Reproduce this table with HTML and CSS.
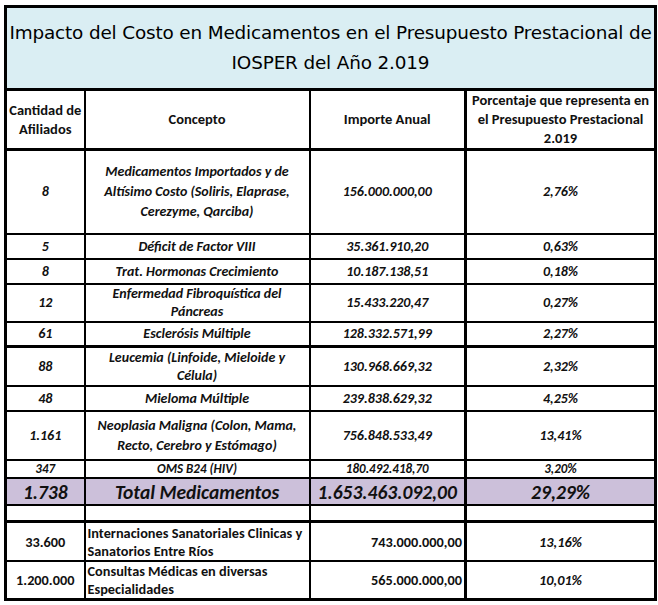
FILE: index.html
```html
<!DOCTYPE html>
<html lang="es">
<head>
<meta charset="utf-8">
<title>Impacto del Costo en Medicamentos</title>
<link rel="stylesheet" href="styles.css">
</head>
<body>
<div class="sheet">
<table class="grid">
  <colgroup>
    <col class="c1"><col class="c2"><col class="c3"><col class="c4">
  </colgroup>
  <tr class="r-title">
    <td colspan="4" class="title">Impacto del Costo en Medicamentos en el Presupuesto Prestacional de<br>IOSPER del Año 2.019</td>
  </tr>
  <tr class="r-head">
    <th>Cantidad de Afiliados</th>
    <th>Concepto</th>
    <th>Importe Anual</th>
    <th class="pct-head">Porcentaje que representa en el Presupuesto Prestacional 2.019</th>
  </tr>
  <tr class="it h86">
    <td>8</td><td class="con">Medicamentos Importados y de Altísimo Costo (Soliris, Elaprase, Cerezyme, Qarciba)</td><td>156.000.000,00</td><td>2,76%</td>
  </tr>
  <tr class="it h25">
    <td>5</td><td class="con">Déficit de Factor VIII</td><td>35.361.910,20</td><td>0,63%</td>
  </tr>
  <tr class="it h25">
    <td>8</td><td class="con">Trat. Hormonas Crecimiento</td><td>10.187.138,51</td><td>0,18%</td>
  </tr>
  <tr class="it h39">
    <td>12</td><td class="con">Enfermedad Fibroquística del Páncreas</td><td>15.433.220,47</td><td>0,27%</td>
  </tr>
  <tr class="it h24 thick-bottom">
    <td>61</td><td class="con">Esclerósis Múltiple</td><td>128.332.571,99</td><td>2,27%</td>
  </tr>
  <tr class="it h40">
    <td>88</td><td class="con">Leucemia (Linfoide, Mieloide y Célula)</td><td>130.968.669,32</td><td>2,32%</td>
  </tr>
  <tr class="it h25">
    <td>48</td><td class="con">Mieloma Múltiple</td><td>239.838.629,32</td><td>4,25%</td>
  </tr>
  <tr class="it h49">
    <td>1.161</td><td class="con">Neoplasia Maligna (Colon, Mama, Recto, Cerebro y Estómago)</td><td>756.848.533,49</td><td>13,41%</td>
  </tr>
  <tr class="it small">
    <td>347</td><td class="con">OMS B24 (HIV)</td><td>180.492.418,70</td><td>3,20%</td>
  </tr>
  <tr class="it total">
    <td>1.738</td><td>Total Medicamentos</td><td>1.653.463.092,00</td><td>29,29%</td>
  </tr>
  <tr class="empty thick-bottom">
    <td></td><td></td><td></td><td></td>
  </tr>
  <tr class="plain p39">
    <td>33.600</td><td class="left">Internaciones Sanatoriales Clinicas y Sanatorios Entre Ríos</td><td class="right">743.000.000,00</td><td class="ital">13,16%</td>
  </tr>
  <tr class="plain">
    <td>1.200.000</td><td class="left">Consultas Médicas en diversas Especialidades</td><td class="right">565.000.000,00</td><td class="ital">10,01%</td>
  </tr>
</table>
</div>
</body>
</html>
```

FILE: styles.css
```css
html, body {
  margin: 0;
  padding: 0;
  background: #ffffff;
}

.sheet {
  padding: 5px 0 0 4px;
}

.grid {
  width: 650px;
  table-layout: fixed;
  border-collapse: collapse;
  border: 3px solid #000;
  font-family: "Carlito", "Lato", "Open Sans", sans-serif;
  font-weight: bold;
  font-size: 14px;
  color: #111;
}

.c1 { width: 79px; }
.c2 { width: 225px; }
.c3 { width: 156px; }
.c4 { width: 190px; }

.grid td,
.grid th {
  border: 2px solid #000;
  padding: 0 3px;
  text-align: center;
  vertical-align: middle;
  line-height: 20px;
}

.grid td:nth-child(3),
.grid th:nth-child(3) {
  border-right-width: 3px;
}

.grid .title {
  height: 80px;
  background: #daeef3;
  font-family: "Comic Sans MS", "DejaVu Sans", sans-serif;
  font-weight: normal;
  font-size: 18.4px;
  line-height: 30px;
  color: #000;
  border-bottom: 3px solid #000;
  padding: 0;
  letter-spacing: -0.15px;
}

.grid .r-head th {
  height: 56px;
  font-size: 14.5px;
  font-weight: bold;
  line-height: 19px;
  border-bottom-width: 3px;
  padding: 0 2px;
}

.it td {
  font-style: italic;
}

.grid .h86 td { height: 82px; }
.grid .h25 td { height: 23px; }
.grid .h24 td { height: 22px; }
.grid .h39 td { height: 36px; line-height: 18px; }
.grid .h40 td { height: 37px; line-height: 18px; }
.grid .h49 td { height: 47px; }

.grid .thick-bottom td {
  border-bottom-width: 3px;
}

.grid .small td {
  height: 16px;
  font-size: 13px;
  line-height: 16px;
}

.grid .total td {
  height: 25px;
  background: #ccc0da;
  font-size: 19.5px;
  line-height: 24px;
}

.grid .empty td {
  height: 14px;
  padding: 0;
}

.grid .plain td {
  height: 36px;
  font-style: normal;
  font-size: 14.3px;
  line-height: 18px;
}

.grid .p39 td {
  height: 37px;
}

.grid .plain .left {
  text-align: left;
  padding-left: 2px;
  padding-right: 0;
}

.grid .plain .right {
  text-align: right;
  padding-right: 2px;
}

.grid .plain .ital {
  font-style: italic;
}
```
